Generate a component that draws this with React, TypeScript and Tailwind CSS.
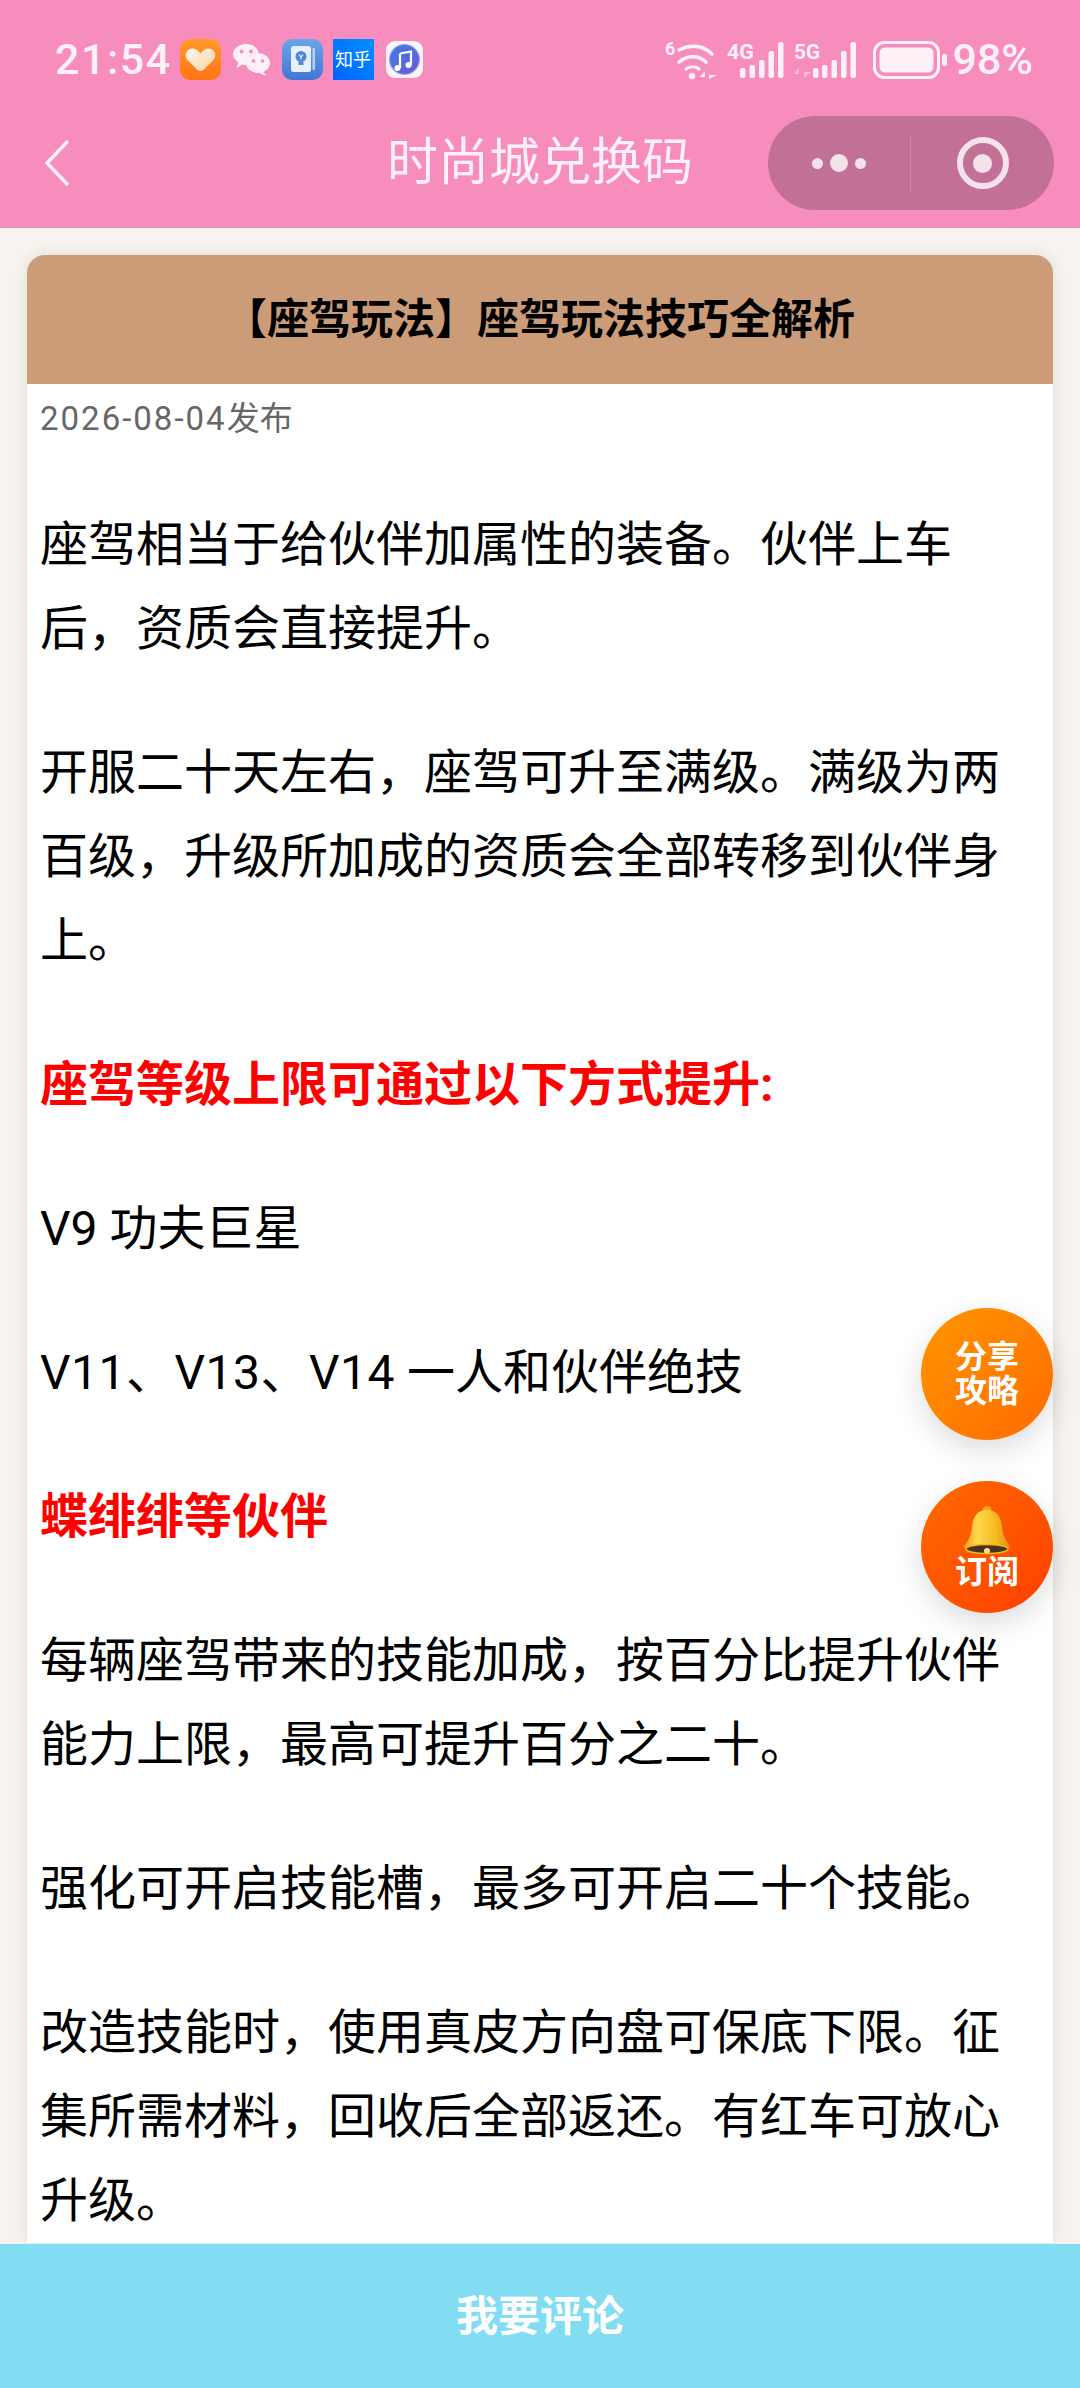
const sans = "font-['Roboto','Noto_Sans_CJK_SC',sans-serif]";

function HeartIcon() {
  return (
    <svg width="41" height="41" viewBox="0 0 41 41">
      <defs>
        <linearGradient id="hb" x1="0" y1="0" x2="0" y2="1">
          <stop offset="0" stopColor="#ff9a2e" />
          <stop offset="1" stopColor="#ff7414" />
        </linearGradient>
        <linearGradient id="hh" x1="0" y1="0" x2="1" y2="1">
          <stop offset="0" stopColor="#fff8ef" />
          <stop offset="1" stopColor="#fbd3a0" />
        </linearGradient>
      </defs>
      <rect width="41" height="41" rx="10" fill="url(#hb)" />
      <path d="M20.5 32 Q18.5 32 17 30.5 L7.5 21 C3.5 16.5 6.5 9.5 12.5 9.5 C15.5 9.5 18.5 11.5 20.5 14.5 C22.5 11.5 25.5 9.5 28.5 9.5 C34.5 9.5 37.5 16.5 33.5 21 L24 30.5 Q22.5 32 20.5 32 Z" fill="url(#hh)" />
    </svg>
  );
}

function WechatIcon() {
  return (
    <svg width="37" height="32" viewBox="0 0 37 32" fill="#fdf0f6">
      <path d="M13 0 C20 0 25 4 25.5 9 C18 9 12 14 13.5 21 C12 21 10.5 21 9 20.5 L4 24 L5 18 C2 16 0 13 0 10 C0 4.5 6 0 13 0 Z" />
      <ellipse cx="25" cy="19" rx="12" ry="10" />
      <path d="M29 27 L34 32 L26 29 Z" />
      <circle cx="8.5" cy="7.5" r="2" fill="#f78dbd" />
      <circle cx="18" cy="7.5" r="2" fill="#f78dbd" />
      <circle cx="20.5" cy="17" r="1.8" fill="#f78dbd" />
      <circle cx="29.5" cy="17" r="1.8" fill="#f78dbd" />
    </svg>
  );
}

function TipsIcon() {
  return (
    <svg width="41" height="41" viewBox="0 0 41 41">
      <defs>
        <linearGradient id="tb" x1="0" y1="0" x2="0" y2="1">
          <stop offset="0" stopColor="#6aa5ec" />
          <stop offset="1" stopColor="#4276d6" />
        </linearGradient>
      </defs>
      <rect width="41" height="41" rx="10" fill="url(#tb)" />
      <rect x="9" y="7" width="20" height="26" rx="2.5" fill="#e8f0fb" />
      <rect x="30.5" y="9" width="2.5" height="22" rx="1" fill="#b9d0f2" />
      <circle cx="19" cy="17.5" r="5.5" fill="#4f86d8" />
      <rect x="16.5" y="23" width="5" height="3" fill="#4f86d8" />
      <path d="M17 15.5 L19 18 L21 15.5 M19 18 V20.5" fill="none" stroke="#e8f0fb" strokeWidth="1.2" />
    </svg>
  );
}

function MusicIcon() {
  return (
    <svg width="37" height="37" viewBox="0 0 37 37">
      <defs>
        <linearGradient id="mb" x1="0" y1="0" x2="1" y2="1">
          <stop offset="0" stopColor="#3f7be0" />
          <stop offset="1" stopColor="#6a5bd8" />
        </linearGradient>
      </defs>
      <rect width="37" height="37" rx="9" fill="#fdf4f8" />
      <circle cx="18.5" cy="18.5" r="15" fill="url(#mb)" stroke="#a9a5f0" strokeWidth="1.2" />
      <path d="M14 12.5 L25 10.5 V24" fill="none" stroke="#fff" strokeWidth="2.2" />
      <path d="M14 12.5 V27" fill="none" stroke="#fff" strokeWidth="2.2" />
      <circle cx="11.5" cy="27" r="3" fill="#fff" />
      <circle cx="22.5" cy="24" r="3" fill="#fff" />
    </svg>
  );
}

function WifiIcon() {
  return (
    <svg width="52" height="44" viewBox="665 36 52 44" fill="none" stroke="#fdf0f6" strokeLinecap="round">
      <text x="665" y="53" fontSize="18" fontWeight="700" fill="#fdf0f6" stroke="none" fontFamily="Roboto, sans-serif">6</text>
      <path d="M679 48 C690 42 703 43 712 52" strokeWidth="3.6" />
      <path d="M679 60 C687 53 699 53 706 60" strokeWidth="3.6" />
      <path d="M686 67 C690 64 696 64 699 67" strokeWidth="3.2" />
      <circle cx="692" cy="74" r="3.2" fill="#fdf0f6" stroke="none" />
      <path d="M705 77 V69 L700 75 H705 Z M709 69 V77 L717 73 H709 Z" fill="#fdf0f6" stroke="none" />
    </svg>
  );
}

function Signal4G() {
  return (
    <svg width="57" height="48" viewBox="0 -6 57 48" fill="#fdf0f6">
      <text x="0" y="17" fontSize="21" fontWeight="700" fontFamily="Roboto, sans-serif" textLength="27" lengthAdjust="spacingAndGlyphs">4G</text>
      <rect x="13" y="26" width="5.5" height="10" rx="2" />
      <rect x="22.5" y="23" width="5.5" height="13" rx="2" />
      <rect x="32" y="18" width="5.5" height="18" rx="2" />
      <rect x="41.5" y="9" width="5.5" height="27" rx="2" />
      <rect x="51" y="0" width="5.5" height="36" rx="2" />
    </svg>
  );
}

function Signal5G() {
  return (
    <svg width="62" height="48" viewBox="0 -6 62 48" fill="#fdf0f6">
      <text x="0" y="17" fontSize="21" fontWeight="700" fontFamily="Roboto, sans-serif" textLength="26" lengthAdjust="spacingAndGlyphs">5G</text>
      <path d="M5 36 V25 L0 32 H5 Z M10 25 V36 L17 30 H10 Z" fill="#fdf0f6" opacity="0.45" />
      <rect x="19" y="26" width="5.5" height="10" rx="2" />
      <rect x="28" y="23" width="5.5" height="13" rx="2" />
      <rect x="37.5" y="18" width="5.5" height="18" rx="2" />
      <rect x="47" y="9" width="5.5" height="27" rx="2" />
      <rect x="56.5" y="0" width="5.5" height="36" rx="2" />
    </svg>
  );
}

function BatteryIcon() {
  return (
    <svg width="74" height="38" viewBox="0 0 74 38">
      <rect x="1.5" y="1.5" width="64" height="35" rx="10" fill="none" stroke="#fdf0f6" strokeWidth="3" />
      <rect x="6.5" y="6.5" width="54" height="25" rx="5.5" fill="#fdf0f6" />
      <rect x="69" y="13" width="5" height="12" rx="2.5" fill="#fdf0f6" />
    </svg>
  );
}

function BellIcon() {
  return (
    <svg width="52" height="50" viewBox="0 0 52 50">
      <defs>
        <linearGradient id="bell" x1="0" y1="0" x2="1" y2="0">
          <stop offset="0" stopColor="#e39a1c" />
          <stop offset="0.3" stopColor="#ffd84a" />
          <stop offset="0.7" stopColor="#f6b91f" />
          <stop offset="1" stopColor="#d98a12" />
        </linearGradient>
      </defs>
      <circle cx="26" cy="4.5" r="4.5" fill="#e9a420" />
      <path d="M26 4 C36 4 40 11 41 21 C42 30 45 36 50 41 C42 46 10 46 2 41 C7 36 10 30 11 21 C12 11 16 4 26 4 Z" fill="url(#bell)" />
      <ellipse cx="26" cy="43" rx="21" ry="4.5" fill="#4a3220" stroke="#f4b71d" strokeWidth="1.5" />
      <circle cx="26" cy="45" r="3" fill="#ffe27a" />
    </svg>
  );
}

export default function App() {
  return (
    <div className={`relative flex h-[2388px] w-[1080px] flex-col overflow-hidden bg-[#f7f3ee] ${sans}`}>
      <header className="flex h-[228px] shrink-0 flex-col bg-[#f78dbd] text-[#fdf0f6]">
        <div className="flex h-[116px] items-center justify-between pl-[55px] pr-[47px] pt-[3px]">
          <div className="flex items-center">
            <span className="text-[43px] font-medium tracking-[1.5px]">21:54</span>
            <div className="ml-[8px] flex items-center">
              <HeartIcon />
              <div className="ml-[12px]"><WechatIcon /></div>
              <div className="ml-[12px]"><TipsIcon /></div>
              <div className="ml-[10px] flex h-[41px] w-[41px] items-center justify-center bg-gradient-to-tr from-[#0062ff] to-[#0090ff] text-[18px] leading-none text-white">知乎</div>
              <div className="ml-[12px]"><MusicIcon /></div>
            </div>
          </div>
          <div className="flex items-center">
            <WifiIcon />
            <div className="ml-[10px]"><Signal4G /></div>
            <div className="ml-[10px]"><Signal5G /></div>
            <div className="ml-[17px]"><BatteryIcon /></div>
            <span className="ml-[5px] text-[43px] font-medium">98%</span>
          </div>
        </div>
        <div className="grid h-[94px] grid-cols-[1fr_auto_1fr] items-center">
          <div className="pl-[44px]">
            <svg width="28" height="48" viewBox="0 0 28 48" fill="none" stroke="#fdf0f6" strokeWidth="3.5">
              <path d="M24 2 L3 24 L24 46" />
            </svg>
          </div>
          <h1 className="text-[51px] font-normal text-[#fdf0f6]">时尚城兑换码</h1>
          <div className="flex justify-end pr-[26px]">
            <div className="flex h-[94px] w-[286px] items-center rounded-full bg-[#c27096]">
              <div className="flex h-[57px] w-[143px] items-center justify-center gap-[7px] border-r border-[#cf83a6]">
                <span className="size-[11px] rounded-full bg-[#f3e2ea]" />
                <span className="size-[18px] rounded-full bg-[#f3e2ea]" />
                <span className="size-[11px] rounded-full bg-[#f3e2ea]" />
              </div>
              <div className="flex flex-1 justify-center">
                <div className="flex size-[52px] items-center justify-center rounded-full border-[6px] border-[#f3e2ea]">
                  <span className="size-[19px] rounded-full bg-[#f3e2ea]" />
                </div>
              </div>
            </div>
          </div>
        </div>
      </header>

      <main className="min-h-0 flex-1 overflow-hidden px-[27px] pt-[27px]">
        <div className="rounded-t-[18px] bg-white shadow-[0_0_16px_rgba(0,0,0,0.1)]">
          <div className="flex h-[129px] items-center justify-center rounded-t-[18px] bg-[#cc9c78] text-[42px] font-bold text-black">
            【座驾玩法】座驾玩法技巧全解析
          </div>
          <div className="px-[13px]">
            <div className="flex h-[70px] items-center text-[33px] text-[#666666]">
              <span className="tracking-[2px]">2026-08-04</span>发布
            </div>
            <div className="mt-[49px] flex flex-col gap-[60px] text-[48px] leading-[84px] text-black">
              <p>座驾相当于给伙伴加属性的装备。伙伴上车后，资质会直接提升。</p>
              <p>开服二十天左右，座驾可升至满级。满级为两百级，升级所加成的资质会全部转移到伙伴身上。</p>
              <p className="font-bold text-[#ff0000]">座驾等级上限可通过以下方式提升:</p>
              <p>V9 功夫巨星</p>
              <p><span className="tracking-[0.5px]">V11、V13、V14</span> 一人和伙伴绝技</p>
              <p className="font-bold text-[#ff0000]">蝶绯绯等伙伴</p>
              <p>每辆座驾带来的技能加成，按百分比提升伙伴能力上限，最高可提升百分之二十。</p>
              <p>强化可开启技能槽，最多可开启二十个技能。</p>
              <p>改造技能时，使用真皮方向盘可保底下限。征集所需材料，回收后全部返还。有红车可放心升级。</p>
            </div>
          </div>
        </div>
      </main>

      <button className="flex h-[144px] w-full shrink-0 items-center justify-center bg-[#82ddf3] text-[42px] font-bold text-[#fdfdfd]">
        我要评论
      </button>

      <div className="absolute right-[27px] top-[1308px] flex flex-col gap-[41px]">
        <div className="flex size-[132px] items-center justify-center rounded-full bg-gradient-to-br from-[#ff9500] to-[#ff6a00] text-center text-[32px] font-bold leading-[34px] text-white shadow-[0_10px_30px_rgba(0,0,0,0.14)]">
          <p>分享<br />攻略</p>
        </div>
        <div className="flex size-[132px] flex-col items-center justify-center rounded-full bg-gradient-to-br from-[#ff6a00] to-[#ff3c00] text-[32px] font-bold leading-[32px] text-white shadow-[0_10px_30px_rgba(0,0,0,0.14)]">
          <BellIcon />
          <span>订阅</span>
        </div>
      </div>
    </div>
  );
}
